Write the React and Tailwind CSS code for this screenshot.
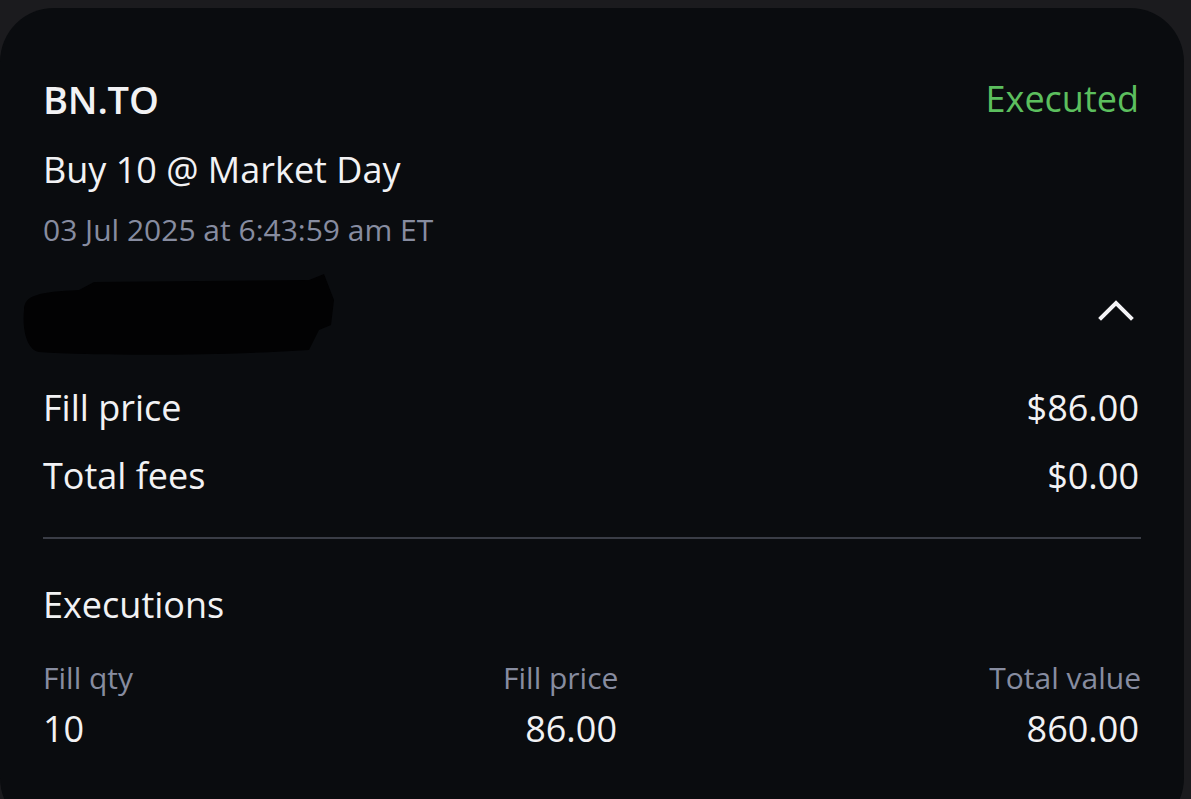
export default function App() {
  const font = { fontFamily: '"Open Sans", "Noto Sans", sans-serif' };
  return (
    <div className="w-[1191px] h-[799px] bg-[#1b1b1e] overflow-hidden pt-[8px] pr-[7px]" style={font}>
      <div className="bg-[#0a0c0f] rounded-[54px] h-[824px] pl-[43px] pr-[45px] pt-[71px] text-[#f2f2f4]">
        <div className="flex justify-between items-start h-[41px] leading-[40px]">
          <div className="text-[38px] font-semibold tracking-[-0.2px]">BN.TO</div>
          <div className="text-[36px] text-[#5cbf5e]">Executed</div>
        </div>
        <div className="mt-[30px] h-[40px] leading-[40px] text-[36px]">Buy 10 @ Market Day</div>
        <div className="mt-[23px] h-[34px] leading-[34px] text-[30px] text-[#878ca0]">03 Jul 2025 at 6:43:59 am ET</div>
        <div className="flex justify-between items-start h-[127px]">
          <svg width="316" height="90" viewBox="0 0 316 90" className="-ml-[24px] mt-[23px]">
            <path d="M5,40 C5,25 20,22 60,20 L75,12 L290,10 L305,4 L315,30 L312,55 L300,60 L290,80 C200,86 80,86 20,82 C8,80 3,60 5,40 Z" fill="#020203" />
          </svg>
          <svg width="38" height="24" viewBox="0 0 38 24" className="mt-[52px] mr-[4px]">
            <polyline points="4,19 19,4 34,19" fill="none" stroke="#f4f4f6" strokeWidth="4" strokeLinecap="square" />
          </svg>
        </div>
        <div className="flex justify-between h-[68px] leading-[68px] text-[36px]">
          <div>Fill price</div>
          <div>$86.00</div>
        </div>
        <div className="flex justify-between h-[68px] leading-[68px] text-[36px]">
          <div>Total fees</div>
          <div>$0.00</div>
        </div>
        <div className="mt-[27px] h-[2px] bg-[#3a3d46] -mr-[2px]"></div>
        <div className="mt-[46px] h-[40px] leading-[40px] text-[36px]">Executions</div>
        <div className="mt-[36px] flex h-[34px] leading-[34px] text-[30px] text-[#878ca0]">
          <div className="w-[460px]">Fill qty</div>
          <div className="w-[114px] text-right whitespace-nowrap">Fill price</div>
          <div className="flex-1 text-right -mr-[2px]">Total value</div>
        </div>
        <div className="mt-[14px] flex h-[40px] leading-[40px] text-[36px]">
          <div className="w-[460px]">10</div>
          <div className="w-[114px] text-right whitespace-nowrap">86.00</div>
          <div className="flex-1 text-right">860.00</div>
        </div>
      </div>
    </div>
  );
}
